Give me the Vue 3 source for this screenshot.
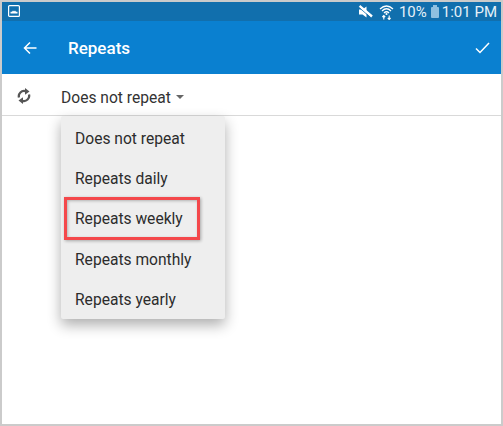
<script setup>
const options = ['Does not repeat', 'Repeats daily', 'Repeats weekly', 'Repeats monthly', 'Repeats yearly']
const highlighted = 'Repeats weekly'
</script>

<template>
  <div class="screen">
    <div class="status">
      <svg class="pic" width="12" height="12" viewBox="0 0 12 12">
        <rect x="0.6" y="0.6" width="10.8" height="10.8" rx="1" fill="none" stroke="#fff" stroke-width="1.2" />
        <path d="M2.5 8.5 L2.5 6.8 L4 6.8 L5 5.5 L6 6.6 L7 5.5 L8 6.8 L9.5 6.8 L9.5 8.5 Z" fill="#fff" />
      </svg>
      <div class="status-right">
        <svg width="15" height="14" viewBox="0 0 15 14">
          <path d="M1 4.5 H4.5 L8.5 1.5 V12.5 L4.5 9.5 H1 Z" fill="#fff" />
          <path d="M1.5 1 L14 11.5" stroke="#fff" stroke-width="2.4" />
          <path d="M1 2.5 L12 12" stroke="#116fad" stroke-width="0.8" />
        </svg>
        <svg class="wifi" width="15" height="16" viewBox="0 0 15 16">
          <path d="M1 5 Q7.5 -1 14 5 M3 7 Q7.5 2.5 12 7 M5 9 Q7.5 6.5 10 9" fill="none" stroke="#fff" stroke-width="1.3" />
          <circle cx="7.5" cy="10" r="1.1" fill="#fff" />
          <path d="M4.8 11.5 V15.5 M3.4 13 L4.8 11.5 L6.2 13 M10.2 11.5 V15.5 M8.8 14 L10.2 15.5 L11.6 14" fill="none" stroke="#fff" stroke-width="1.1" />
        </svg>
        <span class="pct">10%</span>
        <span class="battery"></span>
        <span class="time">1:01 PM</span>
      </div>
    </div>

    <div class="appbar">
      <svg class="back" width="14" height="14" viewBox="0 0 14 14">
        <path d="M13.5 7 H1.5 M7 1.5 L1.5 7 L7 12.5" fill="none" stroke="#fff" stroke-width="1.5" />
      </svg>
      <span class="title">Repeats</span>
      <svg class="check" width="15" height="12" viewBox="0 0 15 12">
        <path d="M1 6.5 L5 10.5 L14 1" fill="none" stroke="#fff" stroke-width="1.5" />
      </svg>
    </div>

    <div class="row">
      <svg class="sync" width="14" height="16" viewBox="0 0 14 16">
        <path d="M2 9.5 A5.2 5.2 0 0 1 8.5 3.2" fill="none" stroke="#555" stroke-width="2.3" />
        <path d="M8 0 L12.5 3.4 L8 6.8 Z" fill="#555" />
        <path d="M12 6.5 A5.2 5.2 0 0 1 5.5 12.8" fill="none" stroke="#555" stroke-width="2.3" />
        <path d="M6 16 L1.5 12.6 L6 9.2 Z" fill="#555" />
      </svg>
      <span class="value">Does not repeat</span>
      <span class="caret"></span>
    </div>

    <ul class="menu">
      <li v-for="opt in options" :key="opt" class="item">
        {{ opt }}
        <span v-if="opt === highlighted" class="mark"></span>
      </li>
    </ul>
  </div>
</template>

<style scoped>
.screen {
  position: relative;
  width: 503px;
  height: 426px;
  box-sizing: border-box;
  border: 2px solid #cbcbcb;
  background: #fff;
  overflow: hidden;
  font-family: Roboto, "Liberation Sans", sans-serif;
}

.status {
  height: 19px;
  background: #116fad;
  display: flex;
  align-items: center;
  justify-content: space-between;
  padding: 0 4px 0 6px;
  color: #e6f1f8;
}

.pic {
  margin-top: -1px;
}

.status-right {
  display: flex;
  align-items: center;
  font-size: 15px;
}

.wifi {
  margin-left: 6px;
}

.pct {
  margin-left: 5px;
}

.battery {
  position: relative;
  width: 8px;
  height: 11px;
  margin-left: 4px;
  margin-top: 2px;
  background: #8fc0e0;
  border-radius: 1px;
}

.battery::before {
  content: '';
  position: absolute;
  left: 2px;
  top: -2px;
  width: 4px;
  height: 2px;
  background: #8fc0e0;
}

.time {
  margin-left: 3px;
}

.appbar {
  height: 53px;
  background: #0a80d0;
  display: flex;
  align-items: center;
  color: #fff;
}

.back {
  margin-left: 21px;
}

.title {
  margin-left: 31px;
  font-size: 17px;
  font-weight: 500;
}

.check {
  margin-left: auto;
  margin-right: 11px;
}

.row {
  height: 42px;
  padding-top: 3px;
  box-sizing: border-box;
  border-bottom: 1px solid #d9d9d9;
  display: flex;
  align-items: center;
  color: #333;
}

.sync {
  margin-left: 15px;
}

.value {
  margin-left: 30px;
  margin-top: 4px;
  font-size: 15.6px;
}

.caret {
  margin-left: 5px;
  margin-top: 1px;
  border-left: 4px solid transparent;
  border-right: 4px solid transparent;
  border-top: 4px solid #666;
}

.menu {
  position: absolute;
  left: 59px;
  top: 114px;
  width: 164px;
  margin: 0;
  padding: 2px 0 0;
  list-style: none;
  background: #eeeeee;
  border-radius: 2px;
  box-shadow: 0 6px 14px rgba(0, 0, 0, 0.32);
}

.item {
  position: relative;
  height: 40.2px;
  line-height: 42px;
  padding-left: 14px;
  font-size: 15.6px;
  color: #2c2c2c;
}

.mark {
  position: absolute;
  left: 3px;
  top: -1px;
  width: 136px;
  height: 43px;
  box-sizing: border-box;
  border: 3px solid #f4484b;
  box-shadow: 1px 1px 3px rgba(0, 0, 0, 0.3), inset 1px 1px 3px rgba(0, 0, 0, 0.25);
}
</style>

<style>
html, body {
  margin: 0;
  background: #fff;
}
</style>
